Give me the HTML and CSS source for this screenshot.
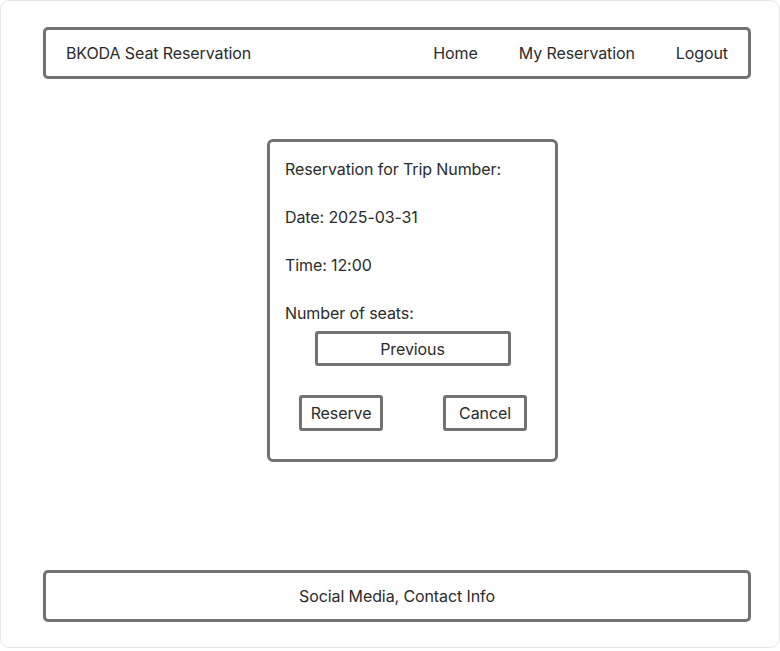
FILE: index.html
```html
<!DOCTYPE html>
<html lang="en">
<head>
<meta charset="utf-8">
<title>BKODA Seat Reservation</title>
<link rel="stylesheet" href="styles.css">
</head>
<body>
<div class="page">
  <header class="topbar">
    <div class="brand">BKODA Seat Reservation</div>
    <nav class="nav">
      <a href="#">Home</a>
      <a href="#">My Reservation</a>
      <a href="#">Logout</a>
    </nav>
  </header>
  <main class="main">
    <section class="card">
      <p class="line">Reservation for Trip Number:</p>
      <p class="line">Date: 2025-03-31</p>
      <p class="line">Time: 12:00</p>
      <p class="line seats">Number of seats:</p>
      <div class="prev-row"><button class="btn btn-wide">Previous</button></div>
      <div class="actions">
        <button class="btn btn-small">Reserve</button>
        <button class="btn btn-small">Cancel</button>
      </div>
    </section>
  </main>
  <footer class="footer">Social Media, Contact Info</footer>
</div>
</body>
</html>
```
FILE: styles.css
```css
* { box-sizing: border-box; }
html, body { margin: 0; padding: 0; }
body {
  background: #fff;
  font-family: Inter, "Noto Sans", "Liberation Sans", sans-serif;
  font-size: 16px;
  letter-spacing: -0.1px;
  color: #2b2b2b;
}
.page {
  width: 780px;
  height: 648px;
  background: #fff;
  border: 1px solid #e6e6e6;
  border-radius: 10px;
  padding: 26px 28px 25px 42px;
  display: flex;
  flex-direction: column;
}
.topbar {
  height: 52px;
  border: 3px solid #727272;
  border-radius: 5px;
  display: flex;
  align-items: center;
  justify-content: space-between;
  padding: 0 20px 0 20px;
}
.nav { display: flex; gap: 41px; }
.nav a { color: #2b2b2b; text-decoration: none; }
.main { flex: 1; }
.card {
  width: 291px;
  margin: 60px 0 0 224px;
  border: 3px solid #727272;
  border-radius: 6px;
  padding: 15px 0 28px 15px;
}
.line { margin: 0 0 24px; line-height: 24px; }
.line.seats { margin-bottom: 6px; }
.prev-row { display: flex; justify-content: center; padding-right: 15px; }
.btn {
  font-family: inherit;
  font-size: 16px;
  letter-spacing: -0.1px;
  color: #2b2b2b;
  background: #fff;
  border: 3px solid #727272;
  border-radius: 3px;
  padding: 0;
  line-height: 20px;
}
.btn-wide { width: 196px; height: 35px; }
.actions {
  display: flex;
  justify-content: space-between;
  margin-top: 29px;
  padding: 0 28px 0 14px;
}
.btn-small { width: 84px; height: 36px; }
.footer {
  height: 52px;
  border: 3px solid #727272;
  border-radius: 5px;
  display: flex;
  align-items: center;
  justify-content: center;
}
```
